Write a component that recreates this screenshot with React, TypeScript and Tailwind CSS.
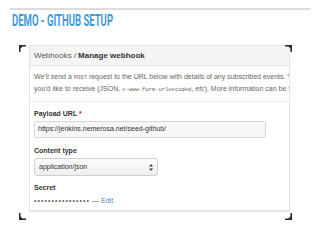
import React from "react";

const Corner = ({ pos }: { pos: "tl" | "tr" | "bl" | "br" }) => {
  const cls =
    pos === "tl"
      ? "absolute left-0 top-0"
      : pos === "tr"
      ? "absolute right-0 top-0"
      : pos === "bl"
      ? "absolute left-0 bottom-0"
      : "absolute right-0 bottom-0";
  const pts =
    pos === "tl"
      ? "0,0 7,0 7,1.5 1.5,1.5 1.5,7 0,7"
      : pos === "tr"
      ? "0,0 7,0 7,7 5.5,7 5.5,1.5 0,1.5"
      : pos === "bl"
      ? "0,0 1.5,0 1.5,5.5 7,5.5 7,7 0,7"
      : "5.5,0 7,0 7,7 0,7 0,5.5 5.5,5.5";
  const tri =
    pos === "tl"
      ? "0,0 5,0 0,5"
      : pos === "tr"
      ? "2,0 7,0 7,5"
      : pos === "bl"
      ? "0,2 0,7 5,7"
      : "7,2 7,7 2,7";
  return (
    <svg className={cls} width="7" height="7" viewBox="0 0 7 7">
      <polygon points={pts} fill="#2a2a2a" />
      <polygon points={tri} fill="#2a2a2a" />
    </svg>
  );
};

export default function App() {
  const sans = { fontFamily: '"Liberation Sans", Arial, sans-serif' };
  const mono = { fontFamily: '"Liberation Mono", "DejaVu Sans Mono", monospace' };
  return (
    <div className="w-[320px] h-[240px] bg-white overflow-hidden relative" style={sans}>
      <div className="pt-[8px] px-[10px]">
        <div className="h-[2px] w-[300px] bg-[#dcdcdc]" />
      </div>
      <div className="pl-[12px] mt-[3px] h-[14px] flex items-center">
        <span
          className="inline-block origin-left font-bold text-[17px] leading-none text-[#3d9ad8] whitespace-nowrap"
          style={{ fontFamily: '"Roboto", "Liberation Sans", sans-serif', transform: "scaleX(0.56)" }}
        >
          DEMO - GITHUB SETUP
        </span>
      </div>
      <div className="relative ml-[19px] mt-[18px] w-[273px] h-[175px]">
        <Corner pos="tl" />
        <Corner pos="tr" />
        <Corner pos="bl" />
        <Corner pos="br" />
        <div className="ml-[10px] mt-[5px] w-[261px] h-[167px] border border-[#e3e3e3] border-b-[2px] overflow-hidden bg-white text-[7px] text-[#333]">
          <div className="h-[20px] bg-[#f5f5f5] border-b border-[#e5e5e5] flex items-center pl-[4px] whitespace-nowrap text-[#555] text-[8px]">
            Webhooks / <span className="font-bold text-[#333] ml-[2px]">Manage webhook</span>
          </div>
          <div className="pt-[5px] pb-[6px] pl-[4px] border-b border-[#eeeeee] leading-[11px] whitespace-nowrap text-[#666]">
            <div>
              We'll send a <span className="text-[5.5px]" style={mono}>POST</span> request to the URL below with details of any subscribed events. You can also specify which data format
            </div>
            <div>
              you'd like to receive (JSON, <span className="text-[5.5px]" style={mono}>x-www-form-urlencoded</span>, <i>etc</i>). More information can be found in our developer documentation.
            </div>
          </div>
          <div className="pl-[4px] pt-[6px]">
            <div className="leading-[11px] font-bold">
              Payload URL <span className="text-[#bd2c00]">*</span>
            </div>
            <div className="mt-[2px] w-[232px] h-[17px] border border-[#d8d8d8] rounded-[2px] bg-[#f6f6f6] flex items-center pl-[3px] text-[#333] whitespace-nowrap">
              https://jenkins.nemerosa.net/seed-github/
            </div>
            <div className="mt-[7px] leading-[11px] font-bold">Content type</div>
            <div className="mt-[2px] w-[124px] h-[18px] border border-[#d0d0d0] rounded-[3px] bg-gradient-to-b from-[#fcfcfc] to-[#eeeeee] flex items-center justify-between pl-[4px] pr-[4px]">
              <span>application/json</span>
              <svg width="4" height="7" viewBox="0 0 4 7">
                <polygon points="2,0 4,2.5 0,2.5" fill="#444" />
                <polygon points="0,4.5 4,4.5 2,7" fill="#444" />
              </svg>
            </div>
            <div className="mt-[6px] leading-[11px] font-bold">Secret</div>
            <div className="mt-[2px] leading-[11px] whitespace-nowrap text-[#555] flex items-center">
              <span className="tracking-[1.05px] text-[#666]">••••••••••••••••</span>
              <span className="ml-[2px]">—</span>
              <span className="ml-[2px] text-[#4183c4]">Edit</span>
            </div>
          </div>
        </div>
      </div>
    </div>
  );
}
